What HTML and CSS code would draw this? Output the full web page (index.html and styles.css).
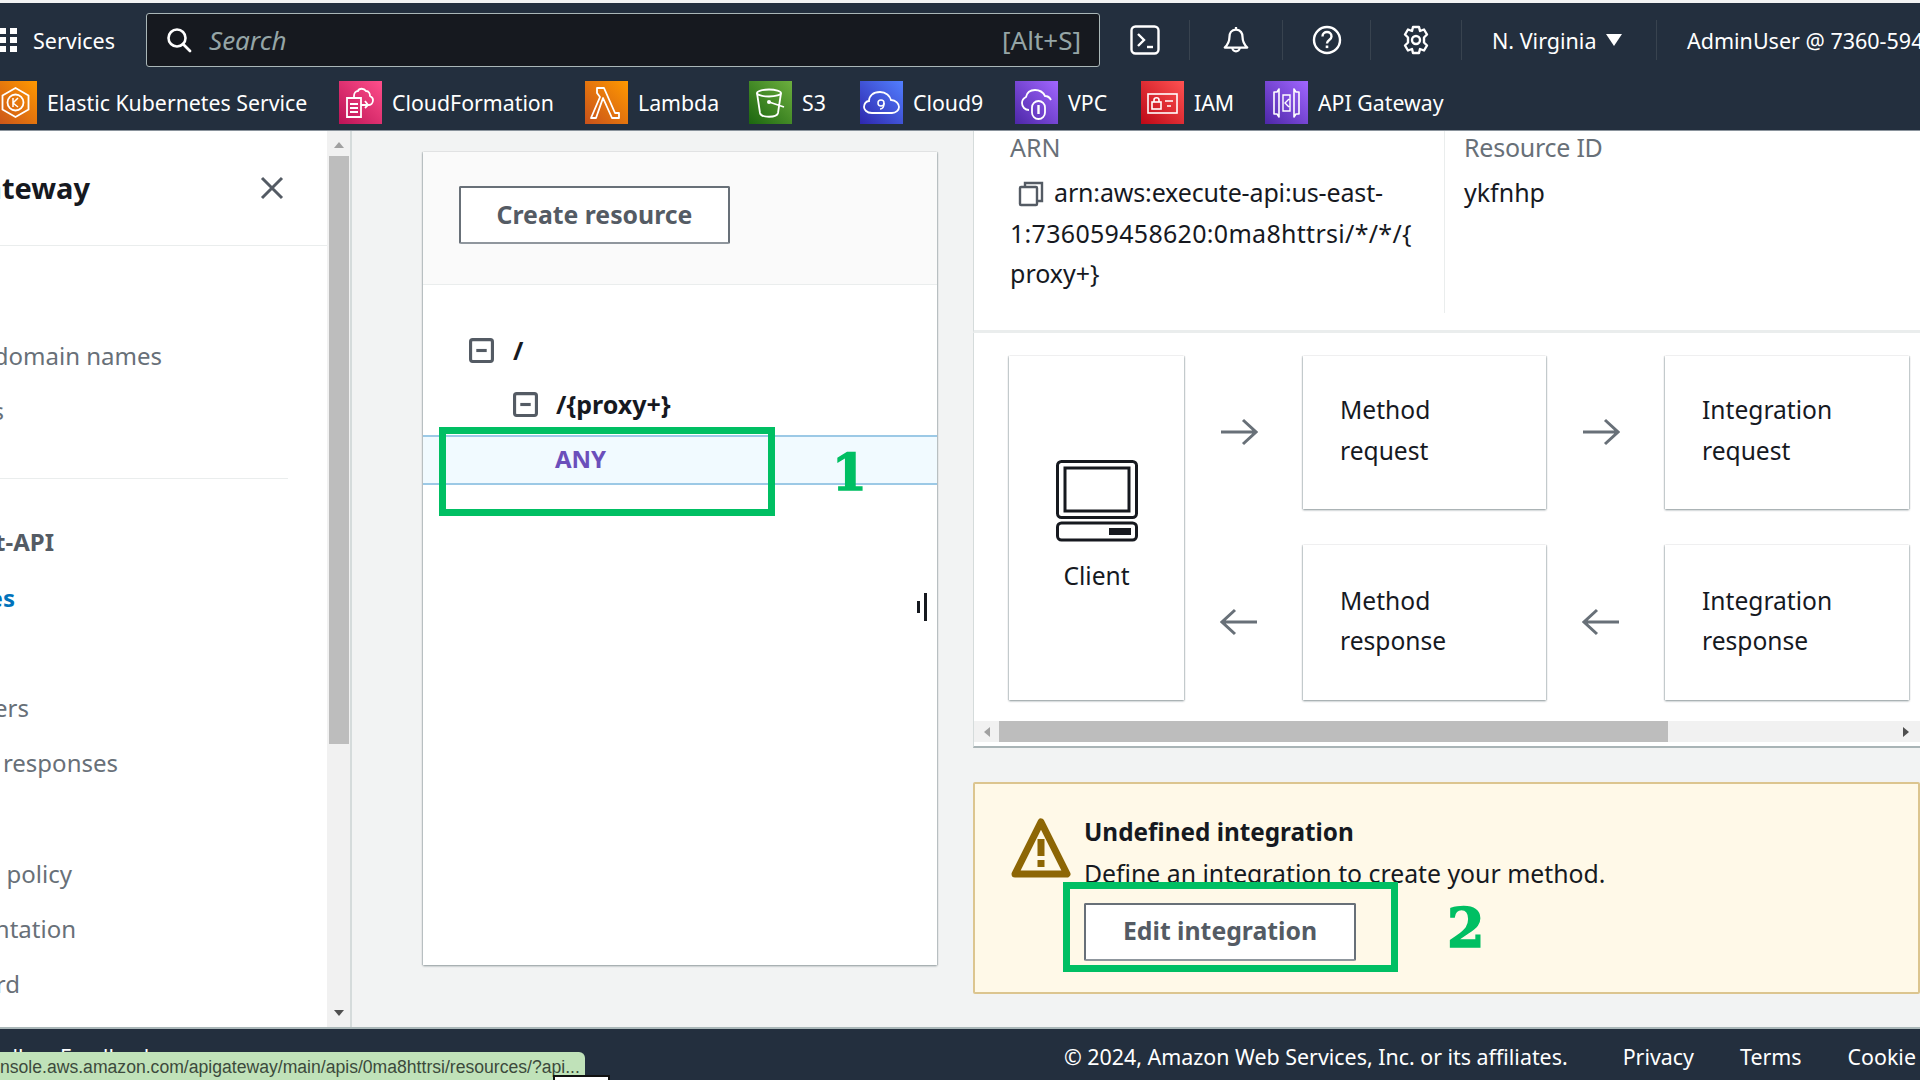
FILE: index.html
```html
<!DOCTYPE html>
<html lang="en">
<head>
<meta charset="utf-8">
<title>API Gateway - Resources</title>
<link rel="stylesheet" href="styles.css">
</head>
<body>
<div class="page">
  <header class="topnav">
    <div class="bar-main">
      <div class="services">
        <svg class="grid-icon" viewBox="0 0 20 24"><g fill="#fff"><rect x="0" y="0" width="6" height="6"/><rect x="10" y="0" width="7" height="6"/><rect x="0" y="9" width="6" height="6"/><rect x="10" y="9" width="7" height="6"/><rect x="0" y="18" width="6" height="6"/><rect x="10" y="18" width="7" height="6"/></g></svg>
        <span>Services</span>
      </div>
      <div class="search">
        <svg class="search-icon" viewBox="0 0 26 26"><circle cx="11" cy="11" r="8.500" fill="none" stroke="#fff" stroke-width="2.600"/><path d="M17 17l7 7" stroke="#fff" stroke-width="2.800" stroke-linecap="round"/></svg>
        <span class="search-text">Search</span>
        <span class="search-key">[Alt+S]</span>
      </div>
      <div class="tool tool-a">
        <svg viewBox="0 0 30 30" class="tool-icon"><rect x="1.500" y="1.500" width="27" height="27" rx="4" fill="none" stroke="#fff" stroke-width="2.400"/><path d="M8 9l6 6-6 6" fill="none" stroke="#fff" stroke-width="2.400"/><path d="M17 22h6" stroke="#fff" stroke-width="2.400"/></svg>
      </div>
      <div class="tool tool-b">
        <svg viewBox="0 0 30 32" class="tool-icon"><path d="M15 2v3M15 5c-5 0-7 4-7 8 0 5-2 8-5 11h24c-3-3-5-6-5-11 0-4-2-8-7-8z" fill="none" stroke="#fff" stroke-width="2.400" stroke-linejoin="round"/><path d="M11 24a4 4 0 0 0 8 0" fill="none" stroke="#fff" stroke-width="2.400"/></svg>
      </div>
      <div class="tool tool-c">
        <svg viewBox="0 0 30 30" class="tool-icon"><circle cx="15" cy="15" r="13" fill="none" stroke="#fff" stroke-width="2.400"/><path d="M10.500 11.500c0-6 9-6 9 0 0 3.500-4.500 3.500-4.500 7" fill="none" stroke="#fff" stroke-width="2.400"/><rect x="13.700" y="20.500" width="2.600" height="2.600" fill="#fff"/></svg>
      </div>
      <div class="tool tool-d">
        <svg viewBox="0 0 30 30" class="tool-icon"><path d="M12 2h6l1 4 4-1.500 3 5-3 3 0 5 3 3-3 5-4-1.500-1 4h-6l-1-4-4 1.500-3-5 3-3 0-5-3-3 3-5 4 1.500z" fill="none" stroke="#fff" stroke-width="2.400" stroke-linejoin="round"/><circle cx="15" cy="15" r="4" fill="none" stroke="#fff" stroke-width="2.400"/></svg>
      </div>
      <div class="region"><span>N. Virginia</span><i class="caret"></i></div>
      <div class="user">AdminUser @ 7360-5945-8620</div>
    </div>
    <nav class="bar-fav">
      <a class="fav"><svg class="fav-icon" viewBox="0 0 43 43"><defs><linearGradient id="gOrange" x1="0" y1="1" x2="1" y2="0"><stop offset="0" stop-color="#c8511b"/><stop offset="1" stop-color="#ff9900"/></linearGradient></defs><rect width="43" height="43" fill="url(#gOrange)"/><path d="M21.500 7l13 7.500v14l-13 7.500-13-7.500v-14z" fill="none" stroke="#fff" stroke-width="1.800"/><circle cx="21.500" cy="21.500" r="8" fill="none" stroke="#fff" stroke-width="1.800"/><path d="M19 17v9M24 17l-5 5 5 4" fill="none" stroke="#fff" stroke-width="1.500"/></svg><span>Elastic Kubernetes Service</span></a>
      <a class="fav"><svg class="fav-icon" viewBox="0 0 43 43"><defs><linearGradient id="gPink" x1="0" y1="1" x2="1" y2="0"><stop offset="0" stop-color="#bc1356"/><stop offset="1" stop-color="#ff4f8b"/></linearGradient></defs><rect width="43" height="43" fill="url(#gPink)"/><path d="M8 17h14v19H8zM11 23h8M11 27h8M11 31h8" fill="none" stroke="#fff" stroke-width="1.800"/><path d="M15 17v-2c0-3 2-5 4-5 1-3 6-3 8 0 3 0 4 3 4 5 2 1 3 3 3 4 0 3-2 5-4 5h-8M26 20l3 4-3 3" fill="none" stroke="#fff" stroke-width="1.800"/></svg><span>CloudFormation</span></a>
      <a class="fav"><svg class="fav-icon" viewBox="0 0 43 43"><rect width="43" height="43" fill="url(#gOrange)"/><path d="M12 7h7l11 25h4v5h-7L18 17 11 37H6l9-21-3-4z" fill="none" stroke="#fff" stroke-width="1.800" stroke-linejoin="round"/></svg><span>Lambda</span></a>
      <a class="fav"><svg class="fav-icon" viewBox="0 0 43 43"><defs><linearGradient id="gGreen" x1="0" y1="1" x2="1" y2="0"><stop offset="0" stop-color="#1b660f"/><stop offset="1" stop-color="#6cae3e"/></linearGradient></defs><rect width="43" height="43" fill="url(#gGreen)"/><ellipse cx="20" cy="12" rx="12" ry="3.500" fill="none" stroke="#fff" stroke-width="1.800"/><path d="M8 12l3 20c1 5 17 5 18 0l3-20M20 21l15 5" fill="none" stroke="#fff" stroke-width="1.800"/><circle cx="20" cy="21" r="2" fill="#fff"/></svg><span>S3</span></a>
      <a class="fav"><svg class="fav-icon" viewBox="0 0 43 43"><defs><linearGradient id="gBlue" x1="0" y1="1" x2="1" y2="0"><stop offset="0" stop-color="#2e27ad"/><stop offset="1" stop-color="#527fff"/></linearGradient></defs><rect width="43" height="43" fill="url(#gBlue)"/><path d="M12 32c-6 0-8-4-8-6 0-3 2-6 5-6 0-5 4-9 11-9 6 0 10 4 11 8 5 0 8 4 8 7 0 3-3 6-7 6z" fill="none" stroke="#fff" stroke-width="1.800"/><circle cx="21" cy="22" r="3" fill="none" stroke="#fff" stroke-width="1.500"/><path d="M24 22c0 4-1 6-4 6" fill="none" stroke="#fff" stroke-width="1.500"/></svg><span>Cloud9</span></a>
      <a class="fav"><svg class="fav-icon" viewBox="0 0 43 43"><defs><linearGradient id="gPurple" x1="0" y1="1" x2="1" y2="0"><stop offset="0" stop-color="#4d27a8"/><stop offset="1" stop-color="#a166ff"/></linearGradient></defs><rect width="43" height="43" fill="url(#gPurple)"/><path d="M14 29c-4 0-7-3-7-7 0-3 2-5 4-6 1-5 5-7 9-7 5 0 8 2 10 6 3 0 5 2 6 4" fill="none" stroke="#fff" stroke-width="1.800"/><rect x="17" y="20" width="13" height="18" rx="6.500" fill="none" stroke="#fff" stroke-width="1.800"/><path d="M23.500 24v9" stroke="#fff" stroke-width="2.400"/></svg><span>VPC</span></a>
      <a class="fav"><svg class="fav-icon" viewBox="0 0 43 43"><defs><linearGradient id="gRed" x1="0" y1="1" x2="1" y2="0"><stop offset="0" stop-color="#bd0816"/><stop offset="1" stop-color="#ff5252"/></linearGradient></defs><rect width="43" height="43" fill="url(#gRed)"/><rect x="7" y="13" width="29" height="19" fill="none" stroke="#fff" stroke-width="1.600"/><rect x="11" y="21" width="9" height="7" fill="none" stroke="#fff" stroke-width="1.600"/><path d="M13 21v-2c0-3 5-3 5 0v2M24 20h8M26 25h4" fill="none" stroke="#fff" stroke-width="1.600"/></svg><span>IAM</span></a>
      <a class="fav"><svg class="fav-icon" viewBox="0 0 43 43"><rect width="43" height="43" fill="url(#gPurple)"/><path d="M9 11h3l2-3v28l-2-3H9zM34 11h-3l-2-3v28l2-3h3z" fill="none" stroke="#fff" stroke-width="1.600" stroke-linejoin="round"/><path d="M18 14h7v16h-7zM24 18l-4 4 4 4" fill="none" stroke="#fff" stroke-width="1.400"/></svg><span>API Gateway</span></a>
    </nav>
  </header>

  <main class="content">
    <aside class="sidenav">
      <div class="sidenav-body">
        <div class="sidenav-head">
          <span class="sidenav-title">API Gateway</span>
          <svg class="close" viewBox="0 0 26 26"><path d="M3 3l20 20M23 3L3 23" stroke="#545b64" stroke-width="3"/></svg>
        </div>
        <div class="sidenav-group g1">
          <a class="item w162">Custom domain names</a>
          <a class="item w4">VPC links</a>
        </div>
        <hr class="sidenav-rule">
        <div class="sidenav-group g2">
          <a class="item bold w54">test-API</a>
          <a class="item active w15">Resources</a>
        </div>
        <div class="sidenav-group g3">
          <a class="item w29">Authorizers</a>
          <a class="item w118">Gateway responses</a>
        </div>
        <div class="sidenav-group g4">
          <a class="item w72">policy</a>
          <a class="item w76">Documentation</a>
          <a class="item w20">Dashboard</a>
        </div>
      </div>
      <div class="sidescroll">
        <i class="arrow-up"></i>
        <div class="sidethumb"></div>
        <i class="arrow-down"></i>
      </div>
    </aside>

    <section class="tree-card">
      <div class="tree-top"><button class="btn btn-create">Create resource</button></div>
      <div class="tree">
        <div class="node n0"><svg class="toggle" viewBox="0 0 24 24"><rect x="1.500" y="1.500" width="21" height="21" rx="2" fill="none" stroke="#545b64" stroke-width="3"/><path d="M7 12h10" stroke="#545b64" stroke-width="3"/></svg><b>/</b></div>
        <div class="node n1"><svg class="toggle" viewBox="0 0 24 24"><rect x="1.500" y="1.500" width="21" height="21" rx="2" fill="none" stroke="#545b64" stroke-width="3"/><path d="M7 12h10" stroke="#545b64" stroke-width="3"/></svg><b>/{proxy+}</b></div>
        <div class="node-method"><b>ANY</b></div>
      </div>
      <div class="cursor-mark"><i class="cm-a"></i><i class="cm-b"></i></div>
    </section>

    <section class="detail">
      <div class="info">
        <div class="info-arn">
          <div class="label">ARN</div>
          <div class="value"><svg class="copy" viewBox="0 0 26 26"><path d="M7 5V2h17v18h-4" fill="none" stroke="#545b64" stroke-width="2.400"/><rect x="2" y="6" width="17" height="18" rx="1" fill="none" stroke="#545b64" stroke-width="2.400"/></svg><span class="arn-1">arn:aws:execute-api:us-east-</span><br><span class="arn-2">1:736059458620:0ma8httrsi/*/*/{</span><br>proxy+}</div>
        </div>
        <div class="info-id">
          <div class="label label-id">Resource ID</div>
          <div class="value">ykfnhp</div>
        </div>
      </div>
      <div class="flow-wrap">
        <div class="flow">
          <div class="box client">
            <svg class="computer" viewBox="0 0 82 82"><rect x="1.500" y="1.500" width="79" height="56" rx="4" fill="none" stroke="#16191f" stroke-width="3"/><rect x="9" y="8" width="64" height="43" fill="none" stroke="#16191f" stroke-width="3"/><rect x="1.500" y="63" width="79" height="17" rx="4" fill="none" stroke="#16191f" stroke-width="3"/><rect x="53" y="68" width="22" height="7" fill="#16191f"/></svg>
            <span>Client</span>
          </div>
          <svg class="arrow" viewBox="0 0 38 28"><path d="M1 14h35M23 2l13 12-13 12" fill="none" stroke="#687078" stroke-width="3"/></svg>
          <div class="box">Method<br>request</div>
          <svg class="arrow" viewBox="0 0 38 28"><path d="M1 14h35M23 2l13 12-13 12" fill="none" stroke="#687078" stroke-width="3"/></svg>
          <div class="box">Integration<br>request</div>
          <svg class="arrow" viewBox="0 0 38 28"><path d="M37 14H2M15 2L2 14l13 12" fill="none" stroke="#687078" stroke-width="3"/></svg>
          <div class="box low">Method<br>response</div>
          <svg class="arrow" viewBox="0 0 38 28"><path d="M37 14H2M15 2L2 14l13 12" fill="none" stroke="#687078" stroke-width="3"/></svg>
          <div class="box low">Integration<br>response</div>
        </div>
        <div class="hscroll">
          <i class="arrow-left"></i>
          <div class="hthumb"></div>
          <i class="arrow-right"></i>
        </div>
      </div>
      <div class="alert">
        <svg class="warn" viewBox="0 0 60 62"><path d="M30 5L56 57H4z" fill="none" stroke="#8d6605" stroke-width="7" stroke-linejoin="round"/><rect x="26.500" y="22" width="7" height="17" fill="#8d6605"/><rect x="26.500" y="43" width="7" height="7" fill="#8d6605"/></svg>
        <div class="alert-body">
          <div class="alert-title">Undefined integration</div>
          <div class="alert-text">Define an integration to create your method.</div>
          <button class="btn btn-edit">Edit integration</button>
        </div>
      </div>
    </section>
  </main>

  <footer class="foot">
    <span class="foot-left">CloudShell</span><span class="foot-left2">Feedback</span>
    <span class="copyright">© 2024, Amazon Web Services, Inc. or its affiliates.</span>
    <span class="foot-link l1">Privacy</span>
    <span class="foot-link l2">Terms</span>
    <span class="foot-link l3">Cookie</span>
  </footer>

  <div class="status">nsole.aws.amazon.com/apigateway/main/apis/0ma8httrsi/resources/?api...</div>
  <div class="status-tip"></div>
  <div class="hl hl-1"></div>
  <div class="num num-1">1</div>
  <div class="hl hl-2"></div>
  <div class="num num-2">2</div>
</div>
</body>
</html>
```
FILE: styles.css
```css
* { box-sizing: border-box; }
html, body { margin: 0; padding: 0; }
body { font-family: "Noto Sans", "Open Sans", sans-serif; color: #16191f; background: #f2f3f3; }
.page { position: relative; width: 1920px; height: 1080px; overflow: hidden; display: flex; flex-direction: column; padding-top: 3px; background: #f2f3f3; }

/* top navigation */
.topnav { height: 128px; background: #232f3e; flex: none; color: #fff; border-bottom: 1px solid #8a939c; }
.bar-main { display: flex; height: 67px; align-items: center; padding: 10px 0 3px; }
.services { width: 146px; flex: none; display: flex; align-items: center; gap: 13px; font-size: 21.500px; height: 100%; }
.grid-icon { width: 20px; height: 24px; flex: none; }
.search { width: 954px; flex: none; height: 54px; background: #16191f; border: 1px solid #aab7b8; border-radius: 3px; display: flex; align-items: center; padding: 0 18px 0 19px; font-size: 26px; }
.search-icon { width: 26px; height: 26px; flex: none; }
.search-text { font-style: italic; color: #95a5a6; margin-left: 17px; flex: 1; }
.search-key { color: #95a5a6; }
.tool { flex: none; height: 40px; display: flex; align-items: center; justify-content: center; border-right: 1px solid #38434f; }
.tool-a { width: 90px; }
.tool-b { width: 93px; }
.tool-c { width: 88px; }
.tool-d { width: 91px; }
.tool-icon { width: 30px; height: 30px; }
.region { flex: none; width: 195px; height: 40px; padding-left: 30px; display: flex; align-items: center; gap: 10px; border-right: 1px solid #38434f; font-size: 21.500px; }
.caret { width: 0; height: 0; border-left: 8px solid transparent; border-right: 8px solid transparent; border-top: 12px solid #fff; }
.user { flex: none; padding-left: 30px; white-space: nowrap; font-size: 21.500px; }

.bar-fav { display: grid; grid-template-columns: 345px 246px 164px 111px 155px 126px 124px 200px; margin-left: -6px; padding-top: 11px; }
.fav { display: flex; align-items: center; gap: 10px; color: #fff; font-size: 21.300px; white-space: nowrap; height: 43px; }
.fav-icon { width: 43px; height: 43px; flex: none; }

/* content */
.content { flex: 1; min-height: 0; display: flex; }
.sidenav { width: 352px; flex: none; display: flex; background: #fff; border-right: 2px solid #d5dbdb; }
.sidenav-body { width: 327px; flex: none; overflow: hidden; font-size: 24px; color: #687078; white-space: nowrap; }
.sidenav-head { height: 115px; display: flex; align-items: center; justify-content: space-between; border-bottom: 1px solid #eaeded; padding-right: 42px; padding-bottom: 1px; }
.sidenav-title { font-size: 29px; font-weight: 700; color: #16191f; display: flex; justify-content: flex-end; width: 90px; }
.close { width: 26px; height: 26px; flex: none; }
.sidenav-rule { border: 0; border-top: 1px solid #eaeded; margin: 0 39px 0 0; }
.sidenav-group { display: flex; flex-direction: column; gap: 20px; }
.g1 { padding-top: 92px; padding-bottom: 50px; }
.g2 { padding-top: 45px; gap: 21px; }
.g3 { padding-top: 75px; }
.g4 { padding-top: 76px; }
.item { display: flex; justify-content: flex-end; height: 35px; line-height: 35px; }
.bold { font-weight: 700; color: #545b64; }
.active { font-weight: 700; color: #0073bb; }
.w162 { width: 162px; } .w4 { width: 4px; } .w54 { width: 54px; } .w15 { width: 15px; }
.w29 { width: 29px; } .w118 { width: 118px; } .w72 { width: 72px; } .w76 { width: 76px; } .w20 { width: 20px; }
.sidescroll { flex: 1; background: #f1f1f1; position: relative; display: flex; flex-direction: column; align-items: center; padding-top: 25px; }
.sidethumb { width: 20px; height: 588px; background: #bdbdbd; }
.arrow-up { position: absolute; top: 11px; left: 7px; border-left: 5px solid transparent; border-right: 5px solid transparent; border-bottom: 6px solid #a0a0a0; }
.arrow-down { position: absolute; bottom: 11px; left: 7px; border-left: 5px solid transparent; border-right: 5px solid transparent; border-top: 6px solid #505050; }

/* tree */
.tree-card { position: relative; width: 514px; height: 813px; flex: none; margin: 21px 36px 0 71px; background: #fff; box-shadow: 0 1px 2px rgba(0,28,36,.4), 1px 0 1px rgba(0,28,36,.12), -1px 0 1px rgba(0,28,36,.12); }
.tree-top { height: 133px; background: #fafafa; border-bottom: 1px solid #eaeded; padding: 34px 0 0 36px; }
.btn { display: block; background: #fff; border: 2px solid #687078; border-bottom-color: #8f969d; border-radius: 2px; color: #545b64; font: 700 24.800px "Noto Sans", sans-serif; padding: 0 0 2px; }
.btn-create { width: 271px; height: 58px; }
.tree { padding-top: 49px; }
.node { display: flex; align-items: center; height: 32px; font-size: 25px; gap: 19px; }
.n0 { padding-left: 46px; }
.n1 { padding-left: 90px; margin-top: 22px; gap: 18px; }
.toggle { width: 25px; height: 25px; flex: none; }
.node-method { margin-top: 15px; height: 50px; background: #f1faff; border-top: 2px solid #9cc9e6; border-bottom: 2px solid #9cc9e6; padding-left: 132px; font-size: 24px; line-height: 43px; color: #6b4fbb; }
.cursor-mark { position: absolute; left: 494px; top: 441px; display: flex; align-items: center; gap: 4px; }
.cm-a { width: 3px; height: 12px; background: #16191f; }
.cm-b { width: 3px; height: 28px; background: #16191f; }

/* detail */
.detail { flex: 1; min-width: 0; display: flex; flex-direction: column; }
.info { height: 202px; display: flex; background: #fff; border-left: 1px solid #d5dbdb; border-bottom: 3px solid #eaeded; padding-left: 36px; font-size: 25px; }
.info-arn { width: 435px; height: 182px; border-right: 1px solid #eaeded; }
.info-id { padding-left: 19px; }
.label { color: #687078; line-height: 32px; }
.label-id { letter-spacing: -.25px; }
.value { line-height: 40.500px; margin-top: 9px; white-space: nowrap; }
.arn-1 { letter-spacing: -.15px; }
.arn-2 { letter-spacing: .3px; }
.copy { width: 26px; height: 26px; margin: 0 10px 0 8px; vertical-align: -5px; }
.flow-wrap { background: #fff; border-left: 1px solid #d5dbdb; border-bottom: 2px solid #a9b4b6; height: 415px; display: flex; flex-direction: column; }
.flow { display: grid; grid-template-columns: 175px 119px 243px 119px 244px; grid-template-rows: 153px 155px; row-gap: 36px; padding: 23px 0 0 35px; height: 388px; flex: none; align-items: center; justify-items: center; }
.box { width: 100%; height: 100%; background: #fff; box-shadow: 0 1px 2px rgba(0,28,36,.45), 1px 0 1px rgba(0,28,36,.1), -1px 0 1px rgba(0,28,36,.1); padding: 33px 0 0 37px; font-size: 24.600px; line-height: 41px; }
.low { padding-top: 36px; line-height: 39.500px; }
.client { grid-row: 1 / span 2; padding: 104px 0 0; display: flex; flex-direction: column; align-items: center; }
.computer { width: 82px; height: 82px; }
.client span { margin-top: 13px; }
.arrow { width: 38px; height: 28px; margin: 0 9px 2px 0; }
.hscroll { height: 21px; flex: none; background: #f1f1f1; position: relative; padding-left: 25px; }
.hthumb { width: 669px; height: 21px; background: #bdbdbd; }
.arrow-left { position: absolute; left: 10px; top: 6px; border-top: 5px solid transparent; border-bottom: 5px solid transparent; border-right: 6px solid #a0a0a0; }
.arrow-right { position: absolute; right: 11px; top: 6px; border-top: 5px solid transparent; border-bottom: 5px solid transparent; border-left: 6px solid #505050; }
.alert { margin-top: 34px; height: 212px; background: #fff9e8; border: 2px solid #dcc58f; border-radius: 2px; display: flex; padding: 33px 0 0 36px; }
.warn { width: 60px; height: 62px; flex: none; }
.alert-body { margin: -3px 0 0 13px; font-size: 24.800px; }
.alert-title { font-weight: 700; line-height: 36px; font-size: 24.300px; }
.alert-text { line-height: 36px; margin-top: 5px; white-space: nowrap; }
.btn-edit { width: 272px; height: 58px; margin-top: 12px; padding-bottom: 4px; }

/* footer */
.foot { height: 53px; flex: none; background: #232f3e; border-top: 2px solid #aab7b8; color: #fff; font-size: 21.400px; position: relative; display: flex; align-items: center; padding: 3px 0 0 1064px; white-space: nowrap; }
.foot-left { position: absolute; left: -83px; top: 13px; }
.foot-left2 { position: absolute; left: 60px; top: 13px; }
.foot-link.l1 { margin-left: 55px; }
.foot-link.l2 { margin-left: 46px; }
.foot-link.l3 { margin-left: 46px; }

/* overlays */
.status { position: absolute; left: 0; top: 1052px; width: 585px; height: 28px; background: #c0e2b9; border-top-right-radius: 6px; color: #3c4a3c; font-family: "Liberation Sans", sans-serif; font-size: 17.600px; line-height: 31px; white-space: nowrap; overflow: hidden; }
.status-tip { position: absolute; left: 553px; top: 1075px; width: 57px; height: 8px; background: #fff; border: 2px solid #111; }
.hl { position: absolute; border: 7px solid #00bf63; }
.hl-1 { left: 439px; top: 427px; width: 336px; height: 89px; }
.hl-2 { left: 1063px; top: 882px; width: 335px; height: 90px; }
.num { position: absolute; font-family: "DejaVu Serif", serif; font-weight: 700; color: #00bf63; line-height: 1; font-size: 50px; -webkit-text-stroke: 1.500px #00bf63; }
.num-1 { left: 832px; top: 448px; }
.num-2 { left: 1447px; top: 901px; font-size: 54px; }
```
